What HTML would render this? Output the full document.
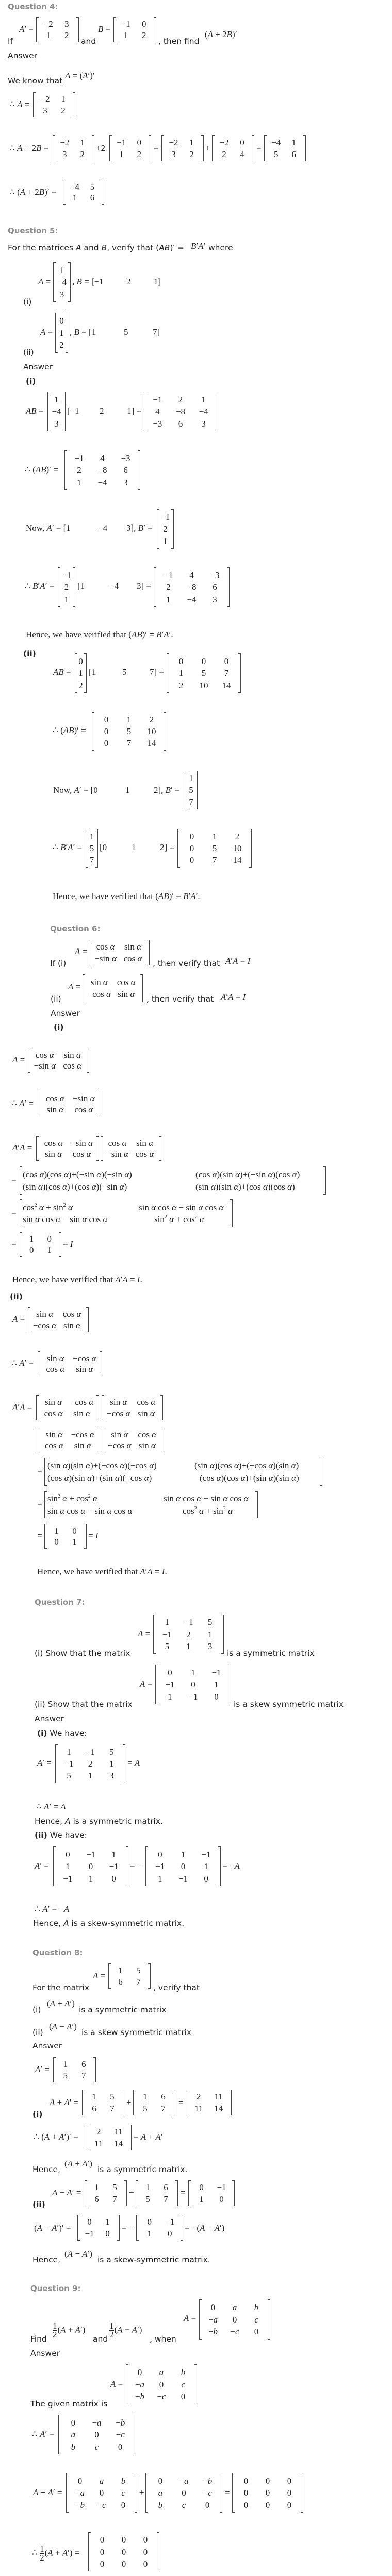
<!DOCTYPE html>
<html><head><meta charset="utf-8"><style>
html{height:5064px;overflow:hidden}
body{margin:0;width:760px;height:5064px;position:relative;background:#fff;color:#222;overflow:hidden}
.t{position:absolute;font:15.5px/18px "DejaVu Sans",sans-serif;white-space:nowrap;color:#222}
.h{position:absolute;font:bold 15px/18px "DejaVu Sans",sans-serif;color:#8c8c8c;white-space:nowrap}
.b{font-weight:bold}
.m{position:absolute;font:17px/18px "Liberation Serif",serif;white-space:nowrap;color:#222}
.x{position:absolute;display:grid;align-content:space-evenly;justify-items:center;font:17px/1 "Liberation Serif",serif;padding:0 6px;box-sizing:border-box;color:#222;white-space:nowrap}
.x:before,.x:after{content:"";position:absolute;top:0;bottom:0;width:4px;border:1px solid #444}
.x:before{left:0;border-right:0}.x:after{right:0;border-left:0}
.c1{grid-template-columns:1fr}.c2{grid-template-columns:1fr 1fr}.c3{grid-template-columns:1fr 1fr 1fr}
.l{justify-items:start}
sup{font-size:10px;vertical-align:7px}
.fr{display:inline-block;vertical-align:middle;text-align:center;line-height:16px;margin-right:1px}
.fr span{display:block}.fr span:first-child{border-bottom:1px solid #222}
</style></head><body>

<!-- Q4 -->
<div class="h" style="left:15px;top:4px">Question 4:</div>
<div class="t" style="left:15px;top:71px">If</div>
<div class="m" style="left:37px;top:48px"><i>A</i>′ =</div>
<div class="x c2" style="left:70px;top:33px;width:83px;height:49px"><span>−2</span><span>3</span><span>1</span><span>2</span></div>
<div class="t" style="left:157px;top:71px">and</div>
<div class="m" style="left:190px;top:48px"><i>B</i> =</div>
<div class="x c2" style="left:220px;top:33px;width:83px;height:49px"><span>−1</span><span>0</span><span>1</span><span>2</span></div>
<div class="t" style="left:307px;top:71px">, then find</div>
<div class="m" style="left:397px;top:58px">(<i>A</i> + 2<i>B</i>)′</div>
<div class="t" style="left:15px;top:99px">Answer</div>
<div class="t" style="left:15px;top:148px">We know that</div>
<div class="m" style="left:126px;top:138px"><i>A</i> = (<i>A</i>′)′</div>
<div class="m" style="left:18px;top:194px">∴ <i>A</i> =</div>
<div class="x c2" style="left:64px;top:179px;width:82px;height:49px"><span>−2</span><span>1</span><span>3</span><span>2</span></div>
<div class="m" style="left:18px;top:279px">∴ <i>A</i> + 2<i>B</i> =</div>
<div class="x c2" style="left:102px;top:263px;width:81px;height:50px"><span>−2</span><span>1</span><span>3</span><span>2</span></div>
<div class="m" style="left:186px;top:279px">+2</div>
<div class="x c2" style="left:212px;top:263px;width:81px;height:50px"><span>−1</span><span>0</span><span>1</span><span>2</span></div>
<div class="m" style="left:298px;top:279px">=</div>
<div class="x c2" style="left:313px;top:263px;width:82px;height:50px"><span>−2</span><span>1</span><span>3</span><span>2</span></div>
<div class="m" style="left:398px;top:279px">+</div>
<div class="x c2" style="left:411px;top:263px;width:82px;height:50px"><span>−2</span><span>0</span><span>2</span><span>4</span></div>
<div class="m" style="left:497px;top:279px">=</div>
<div class="x c2" style="left:512px;top:263px;width:81px;height:50px"><span>−4</span><span>1</span><span>5</span><span>6</span></div>
<div class="m" style="left:18px;top:364px">∴ (<i>A</i> + 2<i>B</i>)′ =</div>
<div class="x c2" style="left:122px;top:349px;width:80px;height:48px"><span>−4</span><span>5</span><span>1</span><span>6</span></div>

<!-- Q5 -->
<div class="h" style="left:15px;top:439px">Question 5:</div>
<div class="t" style="left:15px;top:472px">For the matrices <i>A</i> and <i>B</i>, verify that (<i>AB</i>)′ =</div>
<div class="m" style="left:370px;top:469px"><i>B</i>′<i>A</i>′</div>
<div class="t" style="left:404px;top:472px">where</div>
<div class="t" style="left:45px;top:577px">(i)</div>
<div class="m" style="left:74px;top:538px"><i>A</i> =</div>
<div class="x c1" style="left:103px;top:509px;width:34px;height:77px"><span>1</span><span>−4</span><span>3</span></div>
<div class="m" style="left:140px;top:538px">, <i>B</i> = [−1</div>
<div class="m" style="left:245px;top:538px">2</div>
<div class="m" style="left:298px;top:538px">1]</div>
<div class="t" style="left:45px;top:675px">(ii)</div>
<div class="m" style="left:78px;top:636px"><i>A</i> =</div>
<div class="x c1" style="left:107px;top:607px;width:25px;height:78px"><span>0</span><span>1</span><span>2</span></div>
<div class="m" style="left:135px;top:636px">, <i>B</i> = [1</div>
<div class="m" style="left:240px;top:636px">5</div>
<div class="m" style="left:296px;top:636px">7]</div>
<div class="t" style="left:45px;top:703px">Answer</div>
<div class="t b" style="left:50px;top:731px">(i)</div>
<div class="m" style="left:50px;top:789px"><i>AB</i> =</div>
<div class="x c1" style="left:92px;top:760px;width:35px;height:77px"><span>1</span><span>−4</span><span>3</span></div>
<div class="m" style="left:130px;top:789px">[−1</div>
<div class="m" style="left:193px;top:789px">2</div>
<div class="m" style="left:246px;top:789px">1] =</div>
<div class="x c3" style="left:277px;top:760px;width:146px;height:77px"><span>−1</span><span>2</span><span>1</span><span>4</span><span>−8</span><span>−4</span><span>−3</span><span>6</span><span>3</span></div>
<div class="m" style="left:48px;top:903px">∴ (<i>AB</i>)′ =</div>
<div class="x c3" style="left:125px;top:874px;width:147px;height:77px"><span>−1</span><span>4</span><span>−3</span><span>2</span><span>−8</span><span>6</span><span>1</span><span>−4</span><span>3</span></div>
<div class="m" style="left:50px;top:1016px">Now, <i>A</i>′ = [1</div>
<div class="m" style="left:190px;top:1016px">−4</div>
<div class="m" style="left:245px;top:1016px">3], <i>B</i>′ =</div>
<div class="x c1" style="left:304px;top:988px;width:33px;height:77px"><span>−1</span><span>2</span><span>1</span></div>
<div class="m" style="left:48px;top:1129px">∴ <i>B</i>′<i>A</i>′ =</div>
<div class="x c1" style="left:112px;top:1101px;width:34px;height:77px"><span>−1</span><span>2</span><span>1</span></div>
<div class="m" style="left:150px;top:1129px">[1</div>
<div class="m" style="left:212px;top:1129px">−4</div>
<div class="m" style="left:265px;top:1129px">3] =</div>
<div class="x c3" style="left:298px;top:1101px;width:147px;height:77px"><span>−1</span><span>4</span><span>−3</span><span>2</span><span>−8</span><span>6</span><span>1</span><span>−4</span><span>3</span></div>
<div class="m" style="left:50px;top:1223px">Hence, we have verified that (<i>AB</i>)′ = <i>B</i>′<i>A</i>′.</div>
<div class="t b" style="left:45px;top:1260px">(ii)</div>
<div class="m" style="left:103px;top:1296px"><i>AB</i> =</div>
<div class="x c1" style="left:145px;top:1268px;width:23px;height:77px"><span>0</span><span>1</span><span>2</span></div>
<div class="m" style="left:172px;top:1296px">[1</div>
<div class="m" style="left:237px;top:1296px">5</div>
<div class="m" style="left:290px;top:1296px">7] =</div>
<div class="x c3" style="left:323px;top:1268px;width:144px;height:77px"><span>0</span><span>0</span><span>0</span><span>1</span><span>5</span><span>7</span><span>2</span><span>10</span><span>14</span></div>
<div class="m" style="left:102px;top:1409px">∴ (<i>AB</i>)′ =</div>
<div class="x c3" style="left:178px;top:1382px;width:144px;height:75px"><span>0</span><span>1</span><span>2</span><span>0</span><span>5</span><span>10</span><span>0</span><span>7</span><span>14</span></div>
<div class="m" style="left:103px;top:1525px">Now, <i>A</i>′ = [0</div>
<div class="m" style="left:243px;top:1525px">1</div>
<div class="m" style="left:298px;top:1525px">2], <i>B</i>′ =</div>
<div class="x c1" style="left:358px;top:1496px;width:25px;height:75px"><span>1</span><span>5</span><span>7</span></div>
<div class="m" style="left:102px;top:1636px">∴ <i>B</i>′<i>A</i>′ =</div>
<div class="x c1" style="left:166px;top:1609px;width:24px;height:75px"><span>1</span><span>5</span><span>7</span></div>
<div class="m" style="left:193px;top:1636px">[0</div>
<div class="m" style="left:255px;top:1636px">1</div>
<div class="m" style="left:310px;top:1636px">2] =</div>
<div class="x c3" style="left:344px;top:1609px;width:144px;height:75px"><span>0</span><span>1</span><span>2</span><span>0</span><span>5</span><span>10</span><span>0</span><span>7</span><span>14</span></div>
<div class="m" style="left:102px;top:1731px">Hence, we have verified that (<i>AB</i>)′ = <i>B</i>′<i>A</i>′.</div>

<!-- Q6 -->
<div class="h" style="left:97px;top:1794px">Question 6:</div>
<div class="t" style="left:97px;top:1861px">If (i)</div>
<div class="m" style="left:145px;top:1838px"><i>A</i> =</div>
<div class="x c2" style="left:172px;top:1824px;width:118px;height:50px"><span>cos <i>α</i></span><span>sin <i>α</i></span><span>−sin <i>α</i></span><span>cos <i>α</i></span></div>
<div class="t" style="left:296px;top:1861px">, then verify that</div>
<div class="m" style="left:437px;top:1857px"><i>A</i>′<i>A</i> = <i>I</i></div>
<div class="m" style="left:132px;top:1906px"><i>A</i> =</div>
<div class="x c2" style="left:160px;top:1891px;width:117px;height:54px"><span>sin <i>α</i></span><span>cos <i>α</i></span><span>−cos <i>α</i></span><span>sin <i>α</i></span></div>
<div class="t" style="left:98px;top:1930px">(ii)</div>
<div class="t" style="left:284px;top:1930px">, then verify that</div>
<div class="m" style="left:428px;top:1927px"><i>A</i>′<i>A</i> = <i>I</i></div>
<div class="t" style="left:98px;top:1958px">Answer</div>
<div class="t b" style="left:104px;top:1985px">(i)</div>

<div class="m" style="left:24px;top:2048px"><i>A</i> =</div>
<div class="x c2" style="left:54px;top:2034px;width:119px;height:48px"><span>cos <i>α</i></span><span>sin <i>α</i></span><span>−sin <i>α</i></span><span>cos <i>α</i></span></div>
<div class="m" style="left:22px;top:2133px">∴ <i>A</i>′ =</div>
<div class="x c2" style="left:73px;top:2119px;width:123px;height:48px"><span>cos <i>α</i></span><span>−sin <i>α</i></span><span>sin <i>α</i></span><span>cos <i>α</i></span></div>
<div class="m" style="left:24px;top:2219px"><i>A</i>′<i>A</i> =</div>
<div class="x c2" style="left:70px;top:2205px;width:122px;height:48px"><span>cos <i>α</i></span><span>−sin <i>α</i></span><span>sin <i>α</i></span><span>cos <i>α</i></span></div>
<div class="x c2" style="left:195px;top:2205px;width:118px;height:48px"><span>cos <i>α</i></span><span>sin <i>α</i></span><span>−sin <i>α</i></span><span>cos <i>α</i></span></div>
<div class="m" style="left:22px;top:2282px">=</div>
<div class="x l" style="left:38px;top:2264px;width:594px;height:55px;grid-template-columns:335px auto"><span>(cos <i>α</i>)(cos <i>α</i>)+(−sin <i>α</i>)(−sin <i>α</i>)</span><span>(cos <i>α</i>)(sin <i>α</i>)+(−sin <i>α</i>)(cos <i>α</i>)</span><span>(sin <i>α</i>)(cos <i>α</i>)+(cos <i>α</i>)(−sin <i>α</i>)</span><span>(sin <i>α</i>)(sin <i>α</i>)+(cos <i>α</i>)(cos <i>α</i>)</span></div>
<div class="m" style="left:22px;top:2346px">=</div>
<div class="x l" style="left:38px;top:2328px;width:413px;height:54px;grid-template-columns:225px auto"><span>cos<sup>2</sup> <i>α</i> + sin<sup>2</sup> <i>α</i></span><span>sin <i>α</i> cos <i>α</i> − sin <i>α</i> cos <i>α</i></span><span>sin <i>α</i> cos <i>α</i> − sin <i>α</i> cos <i>α</i></span><span style="padding-left:30px">sin<sup>2</sup> <i>α</i> + cos<sup>2</sup> <i>α</i></span></div>
<div class="m" style="left:22px;top:2406px">=</div>
<div class="x c2" style="left:38px;top:2392px;width:81px;height:47px"><span>1</span><span>0</span><span>0</span><span>1</span></div>
<div class="m" style="left:122px;top:2406px">= <i>I</i></div>
<div class="m" style="left:24px;top:2475px">Hence, we have verified that <i>A</i>′<i>A</i> = <i>I</i>.</div>

<div class="t b" style="left:19px;top:2508px">(ii)</div>
<div class="m" style="left:24px;top:2552px"><i>A</i> =</div>
<div class="x c2" style="left:54px;top:2537px;width:118px;height:49px"><span>sin <i>α</i></span><span>cos <i>α</i></span><span>−cos <i>α</i></span><span>sin <i>α</i></span></div>
<div class="m" style="left:22px;top:2637px">∴ <i>A</i>′ =</div>
<div class="x c2" style="left:73px;top:2623px;width:125px;height:48px"><span>sin <i>α</i></span><span>−cos <i>α</i></span><span>cos <i>α</i></span><span>sin <i>α</i></span></div>
<div class="m" style="left:24px;top:2723px"><i>A</i>′<i>A</i> =</div>
<div class="x c2" style="left:70px;top:2708px;width:122px;height:49px"><span>sin <i>α</i></span><span>−cos <i>α</i></span><span>cos <i>α</i></span><span>sin <i>α</i></span></div>
<div class="x c2" style="left:197px;top:2708px;width:119px;height:49px"><span>sin <i>α</i></span><span>cos <i>α</i></span><span>−cos <i>α</i></span><span>sin <i>α</i></span></div>
<div class="x c2" style="left:71px;top:2771px;width:123px;height:48px"><span>sin <i>α</i></span><span>−cos <i>α</i></span><span>cos <i>α</i></span><span>sin <i>α</i></span></div>
<div class="x c2" style="left:199px;top:2771px;width:119px;height:48px"><span>sin <i>α</i></span><span>cos <i>α</i></span><span>−cos <i>α</i></span><span>sin <i>α</i></span></div>
<div class="m" style="left:72px;top:2847px">=</div>
<div class="x l" style="left:86px;top:2829px;width:539px;height:55px;grid-template-columns:285px auto"><span>(sin <i>α</i>)(sin <i>α</i>)+(−cos <i>α</i>)(−cos <i>α</i>)</span><span>(sin <i>α</i>)(cos <i>α</i>)+(−cos <i>α</i>)(sin <i>α</i>)</span><span>(cos <i>α</i>)(sin <i>α</i>)+(sin <i>α</i>)(−cos <i>α</i>)</span><span style="padding-left:10px">(cos <i>α</i>)(cos <i>α</i>)+(sin <i>α</i>)(sin <i>α</i>)</span></div>
<div class="m" style="left:72px;top:2911px">=</div>
<div class="x l" style="left:86px;top:2894px;width:414px;height:53px;grid-template-columns:225px auto"><span>sin<sup>2</sup> <i>α</i> + cos<sup>2</sup> <i>α</i></span><span>sin <i>α</i> cos <i>α</i> − sin <i>α</i> cos <i>α</i></span><span>sin <i>α</i> cos <i>α</i> − sin <i>α</i> cos <i>α</i></span><span style="padding-left:37px">cos<sup>2</sup> <i>α</i> + sin<sup>2</sup> <i>α</i></span></div>
<div class="m" style="left:72px;top:2972px">=</div>
<div class="x c2" style="left:86px;top:2958px;width:82px;height:48px"><span>1</span><span>0</span><span>0</span><span>1</span></div>
<div class="m" style="left:171px;top:2972px">= <i>I</i></div>
<div class="m" style="left:72px;top:3042px">Hence, we have verified that <i>A</i>′<i>A</i> = <i>I</i>.</div>

<!-- Q7 -->
<div class="h" style="left:67px;top:3101px">Question 7:</div>
<div class="m" style="left:267px;top:3162px"><i>A</i> =</div>
<div class="x c3" style="left:297px;top:3134px;width:137px;height:76px"><span>1</span><span>−1</span><span>5</span><span>−1</span><span>2</span><span>1</span><span>5</span><span>1</span><span>3</span></div>
<div class="t" style="left:67px;top:3200px">(i) Show that the matrix</div>
<div class="t" style="left:440px;top:3200px">is a symmetric matrix</div>
<div class="m" style="left:271px;top:3260px"><i>A</i> =</div>
<div class="x c3" style="left:301px;top:3231px;width:147px;height:77px"><span>0</span><span>1</span><span>−1</span><span>−1</span><span>0</span><span>1</span><span>1</span><span>−1</span><span>0</span></div>
<div class="t" style="left:67px;top:3299px">(ii) Show that the matrix</div>
<div class="t" style="left:453px;top:3299px">is a skew symmetric matrix</div>
<div class="t" style="left:67px;top:3327px">Answer</div>
<div class="t" style="left:72px;top:3355px"><b>(i)</b> We have:</div>
<div class="m" style="left:72px;top:3413px"><i>A</i>′ =</div>
<div class="x c3" style="left:107px;top:3386px;width:136px;height:75px"><span>1</span><span>−1</span><span>5</span><span>−1</span><span>2</span><span>1</span><span>5</span><span>1</span><span>3</span></div>
<div class="m" style="left:247px;top:3413px">= <i>A</i></div>
<div class="m" style="left:70px;top:3498px">∴ <i>A</i>′ = <i>A</i></div>
<div class="t" style="left:67px;top:3526px">Hence, <i>A</i> is a symmetric matrix.</div>
<div class="t" style="left:67px;top:3553px"><b>(ii)</b> We have:</div>
<div class="m" style="left:67px;top:3613px"><i>A</i>′ =</div>
<div class="x c3" style="left:103px;top:3584px;width:146px;height:77px"><span>0</span><span>−1</span><span>1</span><span>1</span><span>0</span><span>−1</span><span>−1</span><span>1</span><span>0</span></div>
<div class="m" style="left:252px;top:3613px">= −</div>
<div class="x c3" style="left:282px;top:3584px;width:146px;height:77px"><span>0</span><span>1</span><span>−1</span><span>−1</span><span>0</span><span>1</span><span>1</span><span>−1</span><span>0</span></div>
<div class="m" style="left:431px;top:3613px">= −<i>A</i></div>
<div class="m" style="left:67px;top:3697px">∴ <i>A</i>′ = −<i>A</i></div>
<div class="t" style="left:64px;top:3724px">Hence, <i>A</i> is a skew-symmetric matrix.</div>

<!-- Q8 -->
<div class="h" style="left:63px;top:3781px">Question 8:</div>
<div class="m" style="left:180px;top:3826px"><i>A</i> =</div>
<div class="x c2" style="left:210px;top:3811px;width:82px;height:49px"><span>1</span><span>5</span><span>6</span><span>7</span></div>
<div class="t" style="left:63px;top:3849px">For the matrix</div>
<div class="t" style="left:297px;top:3849px">, verify that</div>
<div class="t" style="left:63px;top:3892px">(i)</div>
<div class="m" style="left:91px;top:3880px">(<i>A</i> + <i>A</i>′)</div>
<div class="t" style="left:153px;top:3892px">is a symmetric matrix</div>
<div class="t" style="left:63px;top:3936px">(ii)</div>
<div class="m" style="left:95px;top:3925px">(<i>A</i> − <i>A</i>′)</div>
<div class="t" style="left:158px;top:3936px">is a skew symmetric matrix</div>
<div class="t" style="left:63px;top:3962px">Answer</div>
<div class="m" style="left:68px;top:4008px"><i>A</i>′ =</div>
<div class="x c2" style="left:103px;top:3993px;width:83px;height:49px"><span>1</span><span>6</span><span>5</span><span>7</span></div>
<div class="t b" style="left:63px;top:4095px">(i)</div>
<div class="m" style="left:96px;top:4072px"><i>A</i> + <i>A</i>′ =</div>
<div class="x c2" style="left:159px;top:4056px;width:82px;height:50px"><span>1</span><span>5</span><span>6</span><span>7</span></div>
<div class="m" style="left:245px;top:4072px">+</div>
<div class="x c2" style="left:258px;top:4056px;width:82px;height:50px"><span>1</span><span>6</span><span>5</span><span>7</span></div>
<div class="m" style="left:346px;top:4072px">=</div>
<div class="x c2" style="left:360px;top:4056px;width:89px;height:50px"><span>2</span><span>11</span><span>11</span><span>14</span></div>
<div class="m" style="left:65px;top:4139px">∴ (<i>A</i> + <i>A</i>′)′ =</div>
<div class="x c2" style="left:166px;top:4124px;width:89px;height:50px"><span>2</span><span>11</span><span>11</span><span>14</span></div>
<div class="m" style="left:259px;top:4139px">= <i>A</i> + <i>A</i>′</div>
<div class="t" style="left:63px;top:4202px">Hence,</div>
<div class="m" style="left:125px;top:4191px">(<i>A</i> + <i>A</i>′)</div>
<div class="t" style="left:189px;top:4202px">is a symmetric matrix.</div>
<div class="t b" style="left:63px;top:4270px">(ii)</div>
<div class="m" style="left:101px;top:4247px"><i>A</i> − <i>A</i>′ =</div>
<div class="x c2" style="left:164px;top:4232px;width:82px;height:50px"><span>1</span><span>5</span><span>6</span><span>7</span></div>
<div class="m" style="left:250px;top:4247px">−</div>
<div class="x c2" style="left:263px;top:4232px;width:82px;height:50px"><span>1</span><span>6</span><span>5</span><span>7</span></div>
<div class="m" style="left:350px;top:4247px">=</div>
<div class="x c2" style="left:365px;top:4232px;width:90px;height:50px"><span>0</span><span>−1</span><span>1</span><span>0</span></div>
<div class="m" style="left:66px;top:4316px">(<i>A</i> − <i>A</i>′)′ =</div>
<div class="x c2" style="left:150px;top:4299px;width:82px;height:50px"><span>0</span><span>1</span><span>−1</span><span>0</span></div>
<div class="m" style="left:235px;top:4316px">= −</div>
<div class="x c2" style="left:264px;top:4299px;width:91px;height:50px"><span>0</span><span>−1</span><span>1</span><span>0</span></div>
<div class="m" style="left:358px;top:4316px">= −(<i>A</i> − <i>A</i>′)</div>
<div class="t" style="left:63px;top:4377px">Hence,</div>
<div class="m" style="left:125px;top:4366px">(<i>A</i> − <i>A</i>′)</div>
<div class="t" style="left:189px;top:4377px">is a skew-symmetric matrix.</div>

<!-- Q9 -->
<div class="h" style="left:59px;top:4433px">Question 9:</div>
<div class="t" style="left:59px;top:4531px">Find</div>
<div class="m" style="left:102px;top:4507px;line-height:16px"><span class="fr"><span>1</span><span>2</span></span>(<i>A</i> + <i>A</i>′)</div>
<div class="t" style="left:180px;top:4531px">and</div>
<div class="m" style="left:212px;top:4507px;line-height:16px"><span class="fr"><span>1</span><span>2</span></span>(<i>A</i> − <i>A</i>′)</div>
<div class="t" style="left:290px;top:4531px">, when</div>
<div class="m" style="left:356px;top:4491px"><i>A</i> =</div>
<div class="x c3" style="left:386px;top:4463px;width:138px;height:78px"><span>0</span><span><i>a</i></span><span><i>b</i></span><span>−<i>a</i></span><span>0</span><span><i>c</i></span><span>−<i>b</i></span><span>−<i>c</i></span><span>0</span></div>
<div class="t" style="left:59px;top:4559px">Answer</div>
<div class="m" style="left:214px;top:4619px"><i>A</i> =</div>
<div class="x c3" style="left:244px;top:4589px;width:138px;height:78px"><span>0</span><span><i>a</i></span><span><i>b</i></span><span>−<i>a</i></span><span>0</span><span><i>c</i></span><span>−<i>b</i></span><span>−<i>c</i></span><span>0</span></div>
<div class="t" style="left:59px;top:4657px">The given matrix is</div>
<div class="m" style="left:62px;top:4716px">∴ <i>A</i>′ =</div>
<div class="x c3" style="left:113px;top:4687px;width:149px;height:77px"><span>0</span><span>−<i>a</i></span><span>−<i>b</i></span><span><i>a</i></span><span>0</span><span>−<i>c</i></span><span><i>b</i></span><span><i>c</i></span><span>0</span></div>
<div class="m" style="left:64px;top:4829px"><i>A</i> + <i>A</i>′ =</div>
<div class="x c3" style="left:128px;top:4800px;width:138px;height:77px"><span>0</span><span><i>a</i></span><span><i>b</i></span><span>−<i>a</i></span><span>0</span><span><i>c</i></span><span>−<i>b</i></span><span>−<i>c</i></span><span>0</span></div>
<div class="m" style="left:270px;top:4829px">+</div>
<div class="x c3" style="left:282px;top:4800px;width:149px;height:77px"><span>0</span><span>−<i>a</i></span><span>−<i>b</i></span><span><i>a</i></span><span>0</span><span>−<i>c</i></span><span><i>b</i></span><span><i>c</i></span><span>0</span></div>
<div class="m" style="left:436px;top:4829px">=</div>
<div class="x c3" style="left:450px;top:4800px;width:138px;height:77px"><span>0</span><span>0</span><span>0</span><span>0</span><span>0</span><span>0</span><span>0</span><span>0</span><span>0</span></div>
<div class="m" style="left:62px;top:4940px;line-height:16px">∴ <span class="fr"><span>1</span><span>2</span></span>(<i>A</i> + <i>A</i>′) =</div>
<div class="x c3" style="left:171px;top:4915px;width:138px;height:76px"><span>0</span><span>0</span><span>0</span><span>0</span><span>0</span><span>0</span><span>0</span><span>0</span><span>0</span></div>

</body></html>
